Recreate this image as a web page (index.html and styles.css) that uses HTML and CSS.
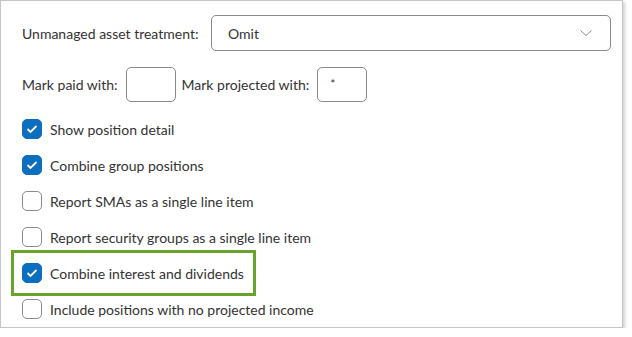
FILE: index.html
```html
<!DOCTYPE html>
<html>
<head>
<meta charset="utf-8">
<link rel="stylesheet" href="styles.css">
</head>
<body>
<div class="panel">
  <div class="row row-select">
    <span class="label">Unmanaged asset treatment:</span>
    <div class="select">
      <span class="select-value">Omit</span>
      <svg class="chevron" width="14" height="8" viewBox="0 0 14 8"><path d="M1.5 1.5 L7 6.5 L12.5 1.5" fill="none" stroke="#8a8a8a" stroke-width="1"/></svg>
    </div>
  </div>
  <div class="row row-marks">
    <span class="label">Mark paid with:</span>
    <div class="input"></div>
    <span class="label">Mark projected with:</span>
    <div class="input"><span class="input-value">*</span></div>
  </div>
  <div class="checks">
    <div class="check"><span class="box checked"><svg width="12" height="10" viewBox="0 0 12 10"><path d="M1.5 5 L4.5 8 L10.5 2" fill="none" stroke="#fff" stroke-width="1.8"/></svg></span><span class="check-label">Show position detail</span></div>
    <div class="check"><span class="box checked"><svg width="12" height="10" viewBox="0 0 12 10"><path d="M1.5 5 L4.5 8 L10.5 2" fill="none" stroke="#fff" stroke-width="1.8"/></svg></span><span class="check-label">Combine group positions</span></div>
    <div class="check"><span class="box"></span><span class="check-label">Report SMAs as a single line item</span></div>
    <div class="check"><span class="box"></span><span class="check-label">Report security groups as a single line item</span></div>
    <div class="check highlighted"><span class="box checked"><svg width="12" height="10" viewBox="0 0 12 10"><path d="M1.5 5 L4.5 8 L10.5 2" fill="none" stroke="#fff" stroke-width="1.8"/></svg></span><span class="check-label">Combine interest and dividends</span></div>
    <div class="check"><span class="box"></span><span class="check-label">Include positions with no projected income</span></div>
  </div>
</div>
</body>
</html>
```
FILE: styles.css
```css
html, body {
  margin: 0;
  padding: 0;
  background: #fff;
}
body {
  font-family: Lato, "Liberation Sans", sans-serif;
  font-size: 14px;
  color: #333;
}
.panel {
  box-sizing: border-box;
  width: 623px;
  height: 328px;
  border: 1px solid #c6c6c6;
  box-shadow: 2px 2px 3px rgba(0, 0, 0, 0.18);
  padding: 14px 0 0 21px;
}
.row {
  display: flex;
  align-items: center;
}
.row-select .label {
  width: 189px;
}
.select {
  box-sizing: border-box;
  width: 400px;
  height: 36px;
  border: 1px solid #8a8a8a;
  border-radius: 5px;
  display: flex;
  align-items: center;
  justify-content: space-between;
  padding: 0 17px 0 16px;
}
.chevron {
  display: block;
}
.row-marks {
  margin-top: 16px;
}
.input {
  box-sizing: border-box;
  width: 50px;
  height: 35px;
  border: 1px solid #8a8a8a;
  border-radius: 5px;
  margin: 0 6px 0 8px;
  position: relative;
}
.input-value {
  position: absolute;
  left: 12px;
  top: 8px;
  font-size: 12px;
}
.checks {
  margin-top: 17px;
  display: flex;
  flex-direction: column;
  gap: 16px;
}
.check {
  display: flex;
  align-items: center;
  height: 20px;
  position: relative;
}
.box {
  box-sizing: border-box;
  width: 20px;
  height: 20px;
  border: 1px solid #8a8a8a;
  border-radius: 5px;
  display: flex;
  align-items: center;
  justify-content: center;
  margin-right: 8px;
  background: #fff;
}
.box.checked {
  background: #0b6ebf;
  border-color: #0b6ebf;
}
.box svg {
  display: block;
}
.highlighted::before {
  content: "";
  position: absolute;
  left: -11px;
  top: -13px;
  width: 245px;
  height: 46px;
  box-sizing: border-box;
  border: 3px solid #6aa32c;
}
.check-label {
  position: relative;
}
```
